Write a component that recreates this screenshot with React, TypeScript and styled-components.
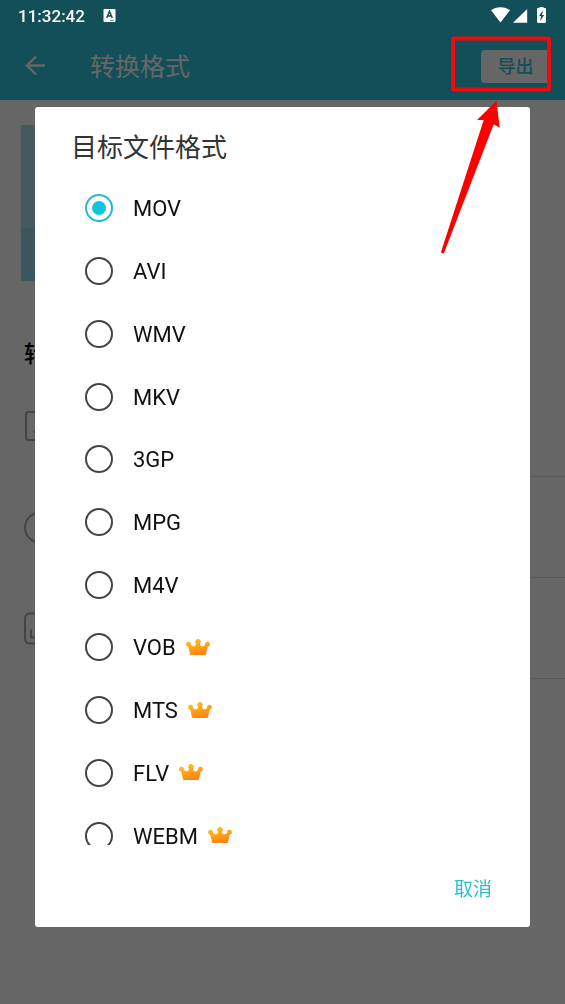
import React, { useState } from "react";
import styled, { createGlobalStyle } from "styled-components";

const sans = `Roboto, "Noto Sans CJK SC", sans-serif`;

const GlobalStyle = createGlobalStyle`
  *, *::before, *::after { box-sizing: border-box; }
  body { margin: 0; background: #fff; font-family: ${sans}; }
  button, input { font-family: inherit; }
`;

const Page = styled.div`
  min-height: 100vh;
  background: #fff;
`;

const Top = styled.div`
  background: #2dc5dc;
`;

const StatusBar = styled.div`
  position: relative;
  z-index: 2;
  display: flex;
  align-items: center;
  height: 32px;
  padding: 0 18px;
  color: #fff;
`;

const Clock = styled.time`
  font-size: 17px;
  line-height: 24px;
  font-weight: 500;
  margin-right: 18px;
`;

const StatusIcons = styled.div`
  display: flex;
  align-items: center;
  margin-left: auto;
`;

const AppBar = styled.header`
  display: flex;
  align-items: center;
  height: 68px;
  padding: 0 15px 0 24px;
`;

const BackButton = styled.button`
  display: flex;
  width: 24px;
  padding: 0;
  border: 0;
  background: none;
`;

const AppTitle = styled.h1`
  flex: 1;
  margin: 0;
  padding: 4px 0 0 42px;
  font-size: 25px;
  line-height: 36px;
  font-weight: 400;
  color: #fff;
`;

const ExportButton = styled.button`
  height: 33px;
  width: 69px;
  padding: 1px 0 0;
  border: 0;
  border-radius: 4px;
  background: #fff;
  color: #2dc5dc;
  font-size: 18px;
  line-height: 32px;
  font-weight: 500;
`;

const Content = styled.main`
  padding: 25px 0 0 21px;
`;

const Thumb = styled.div`
  width: 156px;
  height: 156px;
  background: linear-gradient(#aae1ee 0 66%, #93d8e8 66%);
`;

const SectionTitle = styled.h2`
  margin: 57px 0 4px 3px;
  font-size: 23px;
  line-height: 34px;
  font-weight: 500;
  color: #000;
`;

const Settings = styled.ul`
  list-style: none;
  margin: 0;
  padding: 0;
`;

const Setting = styled.li`
  display: flex;
  align-items: center;
  gap: 24px;
  height: 101px;
  padding-left: 2px;

  &::after {
    content: "";
    flex: 1;
    align-self: stretch;
    border-bottom: 1px solid #ddd;
  }
`;

const Scrim = styled.div`
  position: fixed;
  inset: 0;
  z-index: 1;
  display: flex;
  flex-direction: column;
  justify-content: center;
  padding: 30px 35px 0;
  background: rgba(0, 0, 0, 0.6);
`;

const Dialog = styled.form`
  display: flex;
  flex-direction: column;
  max-height: 100%;
  border-radius: 3px;
  background: #fff;
`;

const DialogTitle = styled.h2`
  margin: 0;
  padding: 23px 36px 11px;
  font-size: 26px;
  line-height: 36px;
  font-weight: 400;
  color: #333;
`;

const Scroller = styled.div`
  height: 668px;
  overflow-y: auto;
  scrollbar-width: none;
`;

const Options = styled.div`
  display: grid;
  grid-auto-rows: 1fr;
  height: 690px;
`;

const Option = styled.label`
  display: flex;
  align-items: center;
  padding: 0 50px;
  font-size: 22px;
  line-height: 32px;
  color: #111;
`;

const OptionName = styled.span`
  padding-top: 2px;
`;

const Radio = styled.input`
  appearance: none;
  display: grid;
  place-items: center;
  flex: none;
  width: 28px;
  height: 28px;
  margin: 0 20px 0 0;
  border: 2px solid #444;
  border-radius: 50%;

  &:checked { border-color: #22bcd2; }
  &:checked::before {
    content: "";
    width: 14px;
    height: 14px;
    border-radius: 50%;
    background: #14c4dc;
  }
`;

const Premium = styled.svg`
  margin-left: 10px;
`;

const Footer = styled.div`
  display: flex;
  justify-content: flex-end;
  padding: 29px 38px 21px;
`;

const CancelButton = styled.button`
  padding: 0;
  border: 0;
  background: none;
  color: #2bbfd3;
  font-size: 19px;
  line-height: 32px;
`;

const Callout = styled.svg`
  position: absolute;
  z-index: 3;
  top: 34px;
  right: 12px;
  pointer-events: none;
`;

function Crown() {
  return (
    <Premium width="24" height="17" viewBox="0 0 24 17" role="img" aria-label="VIP">
      <defs>
        <linearGradient id="crown" x1="0" y1="0" x2="0.4" y2="1">
          <stop offset="0" stopColor="#ffc922" />
          <stop offset="1" stopColor="#ff8412" />
        </linearGradient>
      </defs>
      <path
        fill="url(#crown)"
        d="M12 0a2.700 2.700 0 0 1 1.900 4.700c.2 1.500 1 2.600 2.300 2.600 1.300 0 2.400-.6 3-1.500a2.400 2.400 0 1 1 2.700 1.700c-.8 2.300-1.300 4.600-1.700 7-.1.900-.7 1.500-1.500 1.500H5.300c-.8 0-1.400-.6-1.500-1.500-.4-2.400-.9-4.700-1.700-7a2.400 2.400 0 1 1 2.700-1.700c.6.900 1.700 1.500 3 1.500 1.300 0 2.100-1.100 2.300-2.600A2.700 2.700 0 0 1 12 0z"
      />
    </Premium>
  );
}

const formats = [
  { name: "MOV" },
  { name: "AVI" },
  { name: "WMV" },
  { name: "MKV" },
  { name: "3GP" },
  { name: "MPG" },
  { name: "M4V" },
  { name: "VOB", premium: true },
  { name: "MTS", premium: true },
  { name: "FLV", premium: true },
  { name: "WEBM", premium: true },
];

export default function App() {
  const [format, setFormat] = useState("MOV");

  return (
    <Page>
      <GlobalStyle />
      <Top>
        <StatusBar>
          <Clock>11:32:42</Clock>
          <svg width="13" height="14" viewBox="0 0 13 14">
            <rect x="0.5" y="0" width="12" height="13" rx="1" fill="#fff" />
            <path d="M3.700 9 6.500 2.500l2.800 6.500M4.700 7h3.600" fill="none" stroke="#124f58" strokeWidth="1.500" />
            <path d="M7 11.500h4" stroke="#7fa0a5" />
          </svg>
          <StatusIcons>
            <svg width="56" height="18" viewBox="0 0 56 18" fill="#fff">
              <path d="M0 3.300C2.500 1.200 5.700.2 9.500.2s7 1 9.500 3.100L9.500 15.500z" />
              <path d="M36.200 2v13.800H22z" />
              <path d="M48.500-.7h4V1h1.300c.7 0 1.200.5 1.200 1.200v12.600c0 .7-.5 1.200-1.200 1.200h-6.600c-.7 0-1.200-.5-1.200-1.200V2.200c0-.7.5-1.200 1.200-1.200h1.300z" />
              <path d="M52.300 3 48 9h2.100l-1 5L53.200 8H51z" fill="#124f58" />
            </svg>
          </StatusIcons>
        </StatusBar>
        <AppBar>
          <BackButton type="button" aria-label="返回">
            <svg width="24" height="24" viewBox="0 0 24 24" fill="none" stroke="#fff" strokeWidth="2.400">
              <path d="M21 11.500H3M12 2.500l-9 9 9 9" />
            </svg>
          </BackButton>
          <AppTitle>转换格式</AppTitle>
          <ExportButton type="button">导出</ExportButton>
        </AppBar>
      </Top>

      <Content>
        <Thumb />
        <SectionTitle>转</SectionTitle>
        <Settings>
          <Setting>
            <svg width="34" height="34" viewBox="0 0 34 34" fill="none" stroke="#aaa" strokeWidth="2">
              <rect x="3" y="2" width="28" height="28" rx="2.500" />
              <path d="M11 22.500l5-5 4 4 5-6" />
            </svg>
          </Setting>
          <Setting>
            <svg width="34" height="34" viewBox="0 0 34 34" fill="none" stroke="#aaa" strokeWidth="2">
              <circle cx="17" cy="16.500" r="15" />
            </svg>
          </Setting>
          <Setting>
            <svg width="34" height="34" viewBox="0 0 34 34" fill="none" stroke="#aaa" strokeWidth="2">
              <rect x="2" y="1.500" width="30" height="30" rx="5" />
              <path d="M8 17.500v8h10" />
            </svg>
          </Setting>
        </Settings>
      </Content>

      <Scrim>
        <Dialog role="dialog" aria-modal="true" aria-labelledby="format-title">
          <DialogTitle id="format-title">目标文件格式</DialogTitle>
          <Scroller>
            <Options role="radiogroup" aria-labelledby="format-title">
              {formats.map(({ name, premium }) => (
                <Option key={name}>
                  <Radio
                    type="radio"
                    name="format"
                    value={name}
                    checked={format === name}
                    onChange={() => setFormat(name)}
                  />
                  <OptionName>{name}</OptionName>
                  {premium && <Crown />}
                </Option>
              ))}
            </Options>
          </Scroller>
          <Footer>
            <CancelButton type="button">取消</CancelButton>
          </Footer>
        </Dialog>
      </Scrim>

      <Callout width="114" height="222" viewBox="0 0 114 222">
        <rect x="14" y="4.500" width="96" height="51" rx="1" fill="none" stroke="#f00a0e" strokeWidth="4" />
        <path
          d="M57.500 66.700 60.700 93.700 54.700 90.300 5 219Q3 220 2 218L44.700 86 38 86z"
          fill="#fe0000"
        />
      </Callout>
    </Page>
  );
}
